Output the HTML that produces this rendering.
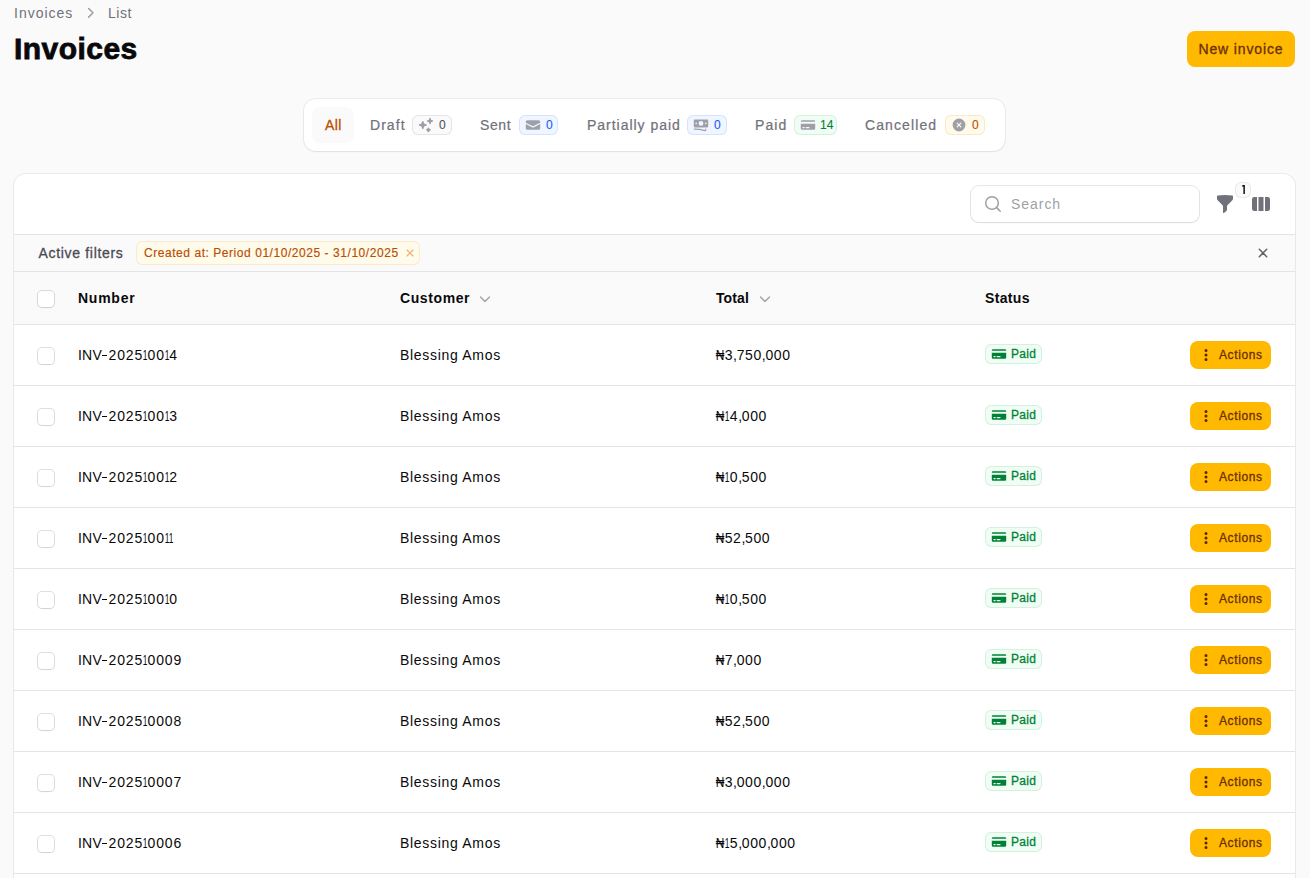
<!DOCTYPE html><html><head><meta charset="utf-8"><style>
*{box-sizing:border-box;margin:0;padding:0}
html,body{width:1310px;height:878px;overflow:hidden;background:#fafafa;font-family:"Liberation Sans", sans-serif;color:#09090b}
.a{position:absolute;white-space:nowrap}
.ic{position:absolute;display:block}
.t14{font-size:14px;line-height:20px}
.t12{font-size:12px;line-height:16px}
.m{-webkit-text-stroke:0.3px currentColor}
</style></head><body><div class="a t14" style="left:14px;top:3px;color:#71717b;letter-spacing:1.0px">Invoices</div>
<svg class="ic" style="left:86px;top:5px;width:10px;height:16px" viewBox="0 0 10 16"><path d="M2.7 3.6 7 7.8 2.7 12.1" fill="none" stroke="#9f9fa9" stroke-width="1.5" stroke-linecap="round" stroke-linejoin="round"/></svg>
<div class="a t14" style="left:108px;top:3px;color:#71717b;letter-spacing:0.5px">List</div>
<div class="a" style="left:14px;top:31px;font-size:30px;line-height:36px;font-weight:700;color:#09090b;letter-spacing:0.45px;-webkit-text-stroke:0.8px #09090b">Invoices</div>
<div class="a t14 m" style="left:1187px;top:31px;width:108px;height:36px;border-radius:8px;background:#ffb900;color:#6b2f06;text-align:center;line-height:36px;letter-spacing:0.87px">New invoice</div>
<div class="a" style="left:304px;top:99px;width:701px;height:52px;background:#fff;border-radius:12px;box-shadow:0 0 0 1px rgba(9,9,11,.06),0 1px 2px rgba(0,0,0,.05)"></div>
<div class="a" style="left:312px;top:107px;width:42px;height:36px;border-radius:8px;background:#fafafa"></div>
<div class="a t14 m" style="left:325px;top:115px;color:#bb4d00;letter-spacing:0.4px">All</div>
<div class="a t14" style="-webkit-text-stroke:0.22px currentColor;left:370px;top:115px;color:#71717b;letter-spacing:1.05px">Draft</div>
<div class="a" style="left:412px;top:115px;width:40px;height:20px;border-radius:6px;background:#fafafa;box-shadow:inset 0 0 0 1px rgba(82,82,92,.12)"></div>
<svg class="ic" style="left:418px;top:117px;width:16px;height:16px;color:#9f9fa9" viewBox="0 0 20 20" fill="currentColor"><path d="M15.98 1.804a1 1 0 0 0-1.96 0l-.24 1.192a1 1 0 0 1-.784.785l-1.192.238a1 1 0 0 0 0 1.962l1.192.238a1 1 0 0 1 .785.785l.238 1.192a1 1 0 0 0 1.962 0l.238-1.192a1 1 0 0 1 .785-.785l1.192-.238a1 1 0 0 0 0-1.962l-1.192-.238a1 1 0 0 1-.785-.785l-.238-1.192ZM6.949 5.684a1 1 0 0 0-1.898 0l-.683 2.051a1 1 0 0 1-.633.633l-2.051.683a1 1 0 0 0 0 1.898l2.051.684a1 1 0 0 1 .633.632l.683 2.051a1 1 0 0 0 1.898 0l.683-2.051a1 1 0 0 1 .633-.633l2.051-.683a1 1 0 0 0 0-1.898l-2.051-.683a1 1 0 0 1-.633-.633L6.95 5.684ZM13.949 13.684a1 1 0 0 0-1.898 0l-.184.551a1 1 0 0 1-.632.633l-.551.183a1 1 0 0 0 0 1.898l.551.183a1 1 0 0 1 .633.633l.183.551a1 1 0 0 0 1.898 0l.184-.551a1 1 0 0 1 .632-.633l.551-.183a1 1 0 0 0 0-1.898l-.551-.184a1 1 0 0 1-.633-.632l-.183-.551Z"/></svg>
<div class="a t12" style="left:439px;top:117px;color:#52525c;-webkit-text-stroke:0.1px currentColor">0</div>
<div class="a t14" style="-webkit-text-stroke:0.22px currentColor;left:480px;top:115px;color:#71717b;letter-spacing:0.6px">Sent</div>
<div class="a" style="left:519px;top:115px;width:39px;height:20px;border-radius:6px;background:#eff6ff;box-shadow:inset 0 0 0 1px rgba(21,93,252,.12)"></div>
<svg class="ic" style="left:525px;top:117px;width:16px;height:16px;color:#9f9fa9" viewBox="0 0 20 20" fill="currentColor"><path d="M3 4a2 2 0 0 0-2 2v1.161l8.441 4.221a1.25 1.25 0 0 0 1.118 0L19 7.162V6a2 2 0 0 0-2-2H3Z"/><path d="m19 8.839-7.77 3.885a2.75 2.75 0 0 1-2.46 0L1 8.839V14a2 2 0 0 0 2 2h14a2 2 0 0 0 2-2V8.839Z"/></svg>
<div class="a t12" style="left:546px;top:117px;color:#155dfc;-webkit-text-stroke:0.1px currentColor">0</div>
<div class="a t14" style="-webkit-text-stroke:0.22px currentColor;left:587px;top:115px;color:#71717b;letter-spacing:0.97px">Partially paid</div>
<div class="a" style="left:687px;top:115px;width:40px;height:20px;border-radius:6px;background:#eff6ff;box-shadow:inset 0 0 0 1px rgba(21,93,252,.12)"></div>
<svg class="ic" style="left:693px;top:117px;width:16px;height:16px;color:#9f9fa9" viewBox="0 0 20 20" fill="currentColor"><path fill-rule="evenodd" d="M1 4a1 1 0 0 1 1-1h16a1 1 0 0 1 1 1v8a1 1 0 0 1-1 1H2a1 1 0 0 1-1-1V4Zm12 4a3 3 0 1 1-6 0 3 3 0 0 1 6 0ZM4 9a1 1 0 1 0 0-2 1 1 0 0 0 0 2Zm13-1a1 1 0 1 1-2 0 1 1 0 0 1 2 0ZM1.75 14.5a.75.75 0 0 0 0 1.5c4.417 0 8.693.603 12.749 1.73 1.111.309 2.251-.512 2.251-1.696v-.784a.75.75 0 0 0-1.5 0v.784a.272.272 0 0 1-.35.25A49.043 49.043 0 0 0 1.75 14.5Z" clip-rule="evenodd"/></svg>
<div class="a t12" style="left:714px;top:117px;color:#155dfc;-webkit-text-stroke:0.1px currentColor">0</div>
<div class="a t14" style="-webkit-text-stroke:0.22px currentColor;left:755px;top:115px;color:#71717b;letter-spacing:1.1px">Paid</div>
<div class="a" style="left:794px;top:115px;width:43px;height:20px;border-radius:6px;background:#f0fdf4;box-shadow:inset 0 0 0 1px rgba(0,166,62,.12)"></div>
<svg class="ic" style="left:800px;top:117px;width:16px;height:16px;color:#9f9fa9" viewBox="0 0 20 20" fill="currentColor"><path fill-rule="evenodd" d="M2.5 4A1.5 1.5 0 0 0 1 5.5V6h18v-.5A1.5 1.5 0 0 0 17.5 4h-15ZM19 8.5H1v6A1.5 1.5 0 0 0 2.5 16h15a1.5 1.5 0 0 0 1.5-1.5v-6ZM3 13.25a.75.75 0 0 1 .75-.75h1.5a.75.75 0 0 1 0 1.5h-1.5a.75.75 0 0 1-.75-.75Zm4.75-.75a.75.75 0 0 0 0 1.5h3.5a.75.75 0 0 0 0-1.5h-3.5Z" clip-rule="evenodd"/></svg>
<div class="a t12" style="left:820px;top:117px;color:#008236;-webkit-text-stroke:0.1px currentColor">14</div>
<div class="a t14" style="-webkit-text-stroke:0.22px currentColor;left:865px;top:115px;color:#71717b;letter-spacing:1.1px">Cancelled</div>
<div class="a" style="left:945px;top:115px;width:40px;height:20px;border-radius:6px;background:#fffbeb;box-shadow:inset 0 0 0 1px rgba(225,113,0,.14)"></div>
<svg class="ic" style="left:951px;top:117px;width:16px;height:16px;color:#9f9fa9" viewBox="0 0 20 20" fill="currentColor"><path fill-rule="evenodd" d="M10 18a8 8 0 1 0 0-16 8 8 0 0 0 0 16ZM8.28 7.22a.75.75 0 0 0-1.06 1.06L8.94 10l-1.72 1.72a.75.75 0 1 0 1.06 1.06L10 11.06l1.72 1.72a.75.75 0 1 0 1.06-1.06L11.06 10l1.72-1.72a.75.75 0 0 0-1.06-1.06L10 8.94 8.28 7.22Z" clip-rule="evenodd"/></svg>
<div class="a t12" style="left:972px;top:117px;color:#bb4d00;-webkit-text-stroke:0.1px currentColor">0</div>
<div class="a" style="left:14px;top:174px;width:1281px;height:760px;background:#fff;border-radius:12px;box-shadow:0 0 0 1px rgba(9,9,11,.06),0 1px 2px rgba(0,0,0,.05)"></div>
<div class="a" style="left:971px;top:186px;width:228px;height:36px;border-radius:8px;background:#fff;box-shadow:0 0 0 1px rgba(9,9,11,.10),0 1px 2px rgba(0,0,0,.05)"></div>
<svg class="ic" style="left:982px;top:193px;width:20px;height:20px" viewBox="0 0 20 20"><circle cx="10" cy="10" r="6.3" fill="none" stroke="#9f9fa9" stroke-width="1.5"/><path d="M14.6 14.6 18.2 18.2" stroke="#9f9fa9" stroke-width="1.5" stroke-linecap="round"/></svg>
<div class="a t14" style="left:1011px;top:194px;color:#9f9fa9;letter-spacing:0.96px">Search</div>
<svg class="ic" style="left:1215px;top:194px;width:20px;height:20px;color:#71717b" viewBox="0 0 20 20" fill="currentColor"><path fill-rule="evenodd" d="M2.628 1.601C5.028 1.206 7.49 1 10 1s4.973.206 7.372.601a.75.75 0 0 1 .628.74v2.288a2.25 2.25 0 0 1-.659 1.59l-4.682 4.683a2.25 2.25 0 0 0-.659 1.59v3.037c0 .684-.31 1.33-.844 1.757l-1.937 1.55A.75.75 0 0 1 8 18.25v-5.757a2.25 2.25 0 0 0-.659-1.591L2.659 6.22A2.25 2.25 0 0 1 2 4.629V2.34a.75.75 0 0 1 .628-.74Z" clip-rule="evenodd"/></svg>
<div class="a" style="left:1235px;top:182px;width:16px;height:16px;border-radius:6px;background:#fafafa;box-shadow:inset 0 0 0 1px rgba(9,9,11,.07);font-size:12px;line-height:16px;text-align:center;color:#09090b"><svg style="position:absolute;left:0;top:0" width="16" height="16" viewBox="0 0 16 16"><path d="M8.4 3.1h1.45v8.8H8.4V4.5H6.9V3.6Q7.9 3.5 8.4 3.1Z" fill="#09090b"/></svg></div>
<svg class="ic" style="left:1251px;top:194px;width:20px;height:20px;color:#71717b" viewBox="0 0 20 20" fill="currentColor"><path d="M14 17h2.75A2.25 2.25 0 0 0 19 14.75v-9.5A2.25 2.25 0 0 0 16.75 3H14v14ZM12.5 3h-5v14h5V3ZM3.25 3H6v14H3.25A2.25 2.25 0 0 1 1 14.75v-9.5A2.25 2.25 0 0 1 3.25 3Z"/></svg>
<div class="a" style="left:14px;top:234px;width:1281px;height:1px;background:#e4e4e7"></div>
<div class="a" style="left:14px;top:235px;width:1281px;height:36px;background:#fafafa"></div>
<div class="a t14 m" style="left:38.5px;top:243px;color:#4a4a52;letter-spacing:0.68px">Active filters</div>
<div class="a t12" style="-webkit-text-stroke:0.15px currentColor;left:136px;top:241px;width:284px;height:24px;border-radius:6px;background:#fffbeb;box-shadow:inset 0 0 0 1px rgba(225,113,0,.12);color:#bb4d00;padding-left:8px;line-height:24px;letter-spacing:0.55px">Created at: Period 01/10/2025 - 31/10/2025</div>
<svg class="ic" style="left:405px;top:248px;width:10px;height:10px" viewBox="0 0 10 10"><path d="M2 2l6 6M8 2 2 8" stroke="#f0b070" stroke-width="1.1" stroke-linecap="round"/></svg>
<svg class="ic" style="left:1256.5px;top:246.5px;width:12px;height:12px" viewBox="0 0 12 12"><path d="M2.3 2.3 9.7 9.7M9.7 2.3 2.3 9.7" stroke="#62626c" stroke-width="1.5" stroke-linecap="round"/></svg>
<div class="a" style="left:14px;top:271px;width:1281px;height:1px;background:#e4e4e7"></div>
<div class="a" style="left:14px;top:272px;width:1281px;height:52px;background:#fafafa"></div>
<div class="a" style="left:38px;top:291px;width:16px;height:16px;border-radius:4px;background:#fff;box-shadow:0 0 0 1px rgba(9,9,11,.13),0 1px 2px rgba(0,0,0,.06)"></div>
<div class="a t14" style="left:78px;top:288px;font-weight:700;letter-spacing:0.75px">Number</div>
<div class="a t14" style="left:400px;top:288px;font-weight:700;letter-spacing:0.6px">Customer</div>
<svg class="ic" style="left:478px;top:292px;width:14px;height:14px" viewBox="0 0 14 14"><path d="M2.5 5 7 9.5 11.5 5" fill="none" stroke="#9f9fa9" stroke-width="1.3" stroke-linecap="round" stroke-linejoin="round"/></svg>
<div class="a t14" style="left:716px;top:288px;font-weight:700;letter-spacing:0.1px">Total</div>
<svg class="ic" style="left:758px;top:292px;width:14px;height:14px" viewBox="0 0 14 14"><path d="M2.5 5 7 9.5 11.5 5" fill="none" stroke="#9f9fa9" stroke-width="1.3" stroke-linecap="round" stroke-linejoin="round"/></svg>
<div class="a t14" style="left:985px;top:288px;font-weight:700;letter-spacing:0.35px">Status</div>
<div class="a" style="left:14px;top:324px;width:1281px;height:1px;background:#e4e4e7"></div>
<div class="a" style="left:38px;top:348px;width:16px;height:16px;border-radius:4px;background:#fff;box-shadow:0 0 0 1px rgba(9,9,11,.13),0 1px 2px rgba(0,0,0,.06)"></div>
<div class="a t14" style="left:78px;top:345px;letter-spacing:0.2px">INV</div>
<div class="a" style="left:101.5px;top:354.5px;width:5.5px;height:1.4px;background:#09090b"></div>
<div class="a t14" style="left:108.5px;top:345px;letter-spacing:0.9px">2025<span style="display:inline-block;transform:scaleX(.6);margin:0 -2.2px 0 -2.25px">1</span>00<span style="display:inline-block;transform:scaleX(.6);margin:0 -2.2px 0 -2.25px">1</span>4</div>
<div class="a t14" style="left:400px;top:345px;letter-spacing:0.7px">Blessing Amos</div>
<div class="a t14" style="left:716px;top:345px;letter-spacing:0.6px"><span style="display:inline-block;transform:scaleX(.85);margin:0 -1.2px 0 -0.9px">₦</span>3<span style="margin-right:-0.9px">,</span>750<span style="margin-right:-0.9px">,</span>000</div>
<div class="a" style="left:985px;top:344px;width:57px;height:20px;border-radius:6px;background:#f0fdf4;box-shadow:inset 0 0 0 1px rgba(0,166,62,.12)"></div>
<svg class="ic" style="left:991px;top:346px;width:16px;height:16px;color:#008236" viewBox="0 0 20 20" fill="currentColor"><path fill-rule="evenodd" d="M2.5 4A1.5 1.5 0 0 0 1 5.5V6h18v-.5A1.5 1.5 0 0 0 17.5 4h-15ZM19 8.5H1v6A1.5 1.5 0 0 0 2.5 16h15a1.5 1.5 0 0 0 1.5-1.5v-6ZM3 13.25a.75.75 0 0 1 .75-.75h1.5a.75.75 0 0 1 0 1.5h-1.5a.75.75 0 0 1-.75-.75Zm4.75-.75a.75.75 0 0 0 0 1.5h3.5a.75.75 0 0 0 0-1.5h-3.5Z" clip-rule="evenodd"/></svg>
<div class="a t12 m" style="left:1011px;top:346px;color:#008236;letter-spacing:0.3px">Paid</div>
<div class="a" style="left:1190px;top:341px;width:81px;height:28px;border-radius:8px;background:#ffb900"></div>
<svg class="ic" style="left:1198px;top:347px;width:16px;height:16px;color:#5a2705" viewBox="0 0 16 16" fill="currentColor"><path d="M8 2a1.5 1.5 0 1 1 0 3 1.5 1.5 0 0 1 0-3ZM8 6.5a1.5 1.5 0 1 1 0 3 1.5 1.5 0 0 1 0-3ZM9.5 12.5a1.5 1.5 0 1 0-3 0 1.5 1.5 0 0 0 3 0Z"/></svg>
<div class="a t12 m" style="left:1219px;top:347px;color:#6b2f06;letter-spacing:0.6px">Actions</div>
<div class="a" style="left:14px;top:385px;width:1281px;height:1px;background:#e4e4e7"></div>
<div class="a" style="left:38px;top:409px;width:16px;height:16px;border-radius:4px;background:#fff;box-shadow:0 0 0 1px rgba(9,9,11,.13),0 1px 2px rgba(0,0,0,.06)"></div>
<div class="a t14" style="left:78px;top:406px;letter-spacing:0.2px">INV</div>
<div class="a" style="left:101.5px;top:415.5px;width:5.5px;height:1.4px;background:#09090b"></div>
<div class="a t14" style="left:108.5px;top:406px;letter-spacing:0.9px">2025<span style="display:inline-block;transform:scaleX(.6);margin:0 -2.2px 0 -2.25px">1</span>00<span style="display:inline-block;transform:scaleX(.6);margin:0 -2.2px 0 -2.25px">1</span>3</div>
<div class="a t14" style="left:400px;top:406px;letter-spacing:0.7px">Blessing Amos</div>
<div class="a t14" style="left:716px;top:406px;letter-spacing:0.6px"><span style="display:inline-block;transform:scaleX(.85);margin:0 -1.2px 0 -0.9px">₦</span><span style="display:inline-block;transform:scaleX(.6);margin:0 -1.65px">1</span>4<span style="margin-right:-0.9px">,</span>000</div>
<div class="a" style="left:985px;top:405px;width:57px;height:20px;border-radius:6px;background:#f0fdf4;box-shadow:inset 0 0 0 1px rgba(0,166,62,.12)"></div>
<svg class="ic" style="left:991px;top:407px;width:16px;height:16px;color:#008236" viewBox="0 0 20 20" fill="currentColor"><path fill-rule="evenodd" d="M2.5 4A1.5 1.5 0 0 0 1 5.5V6h18v-.5A1.5 1.5 0 0 0 17.5 4h-15ZM19 8.5H1v6A1.5 1.5 0 0 0 2.5 16h15a1.5 1.5 0 0 0 1.5-1.5v-6ZM3 13.25a.75.75 0 0 1 .75-.75h1.5a.75.75 0 0 1 0 1.5h-1.5a.75.75 0 0 1-.75-.75Zm4.75-.75a.75.75 0 0 0 0 1.5h3.5a.75.75 0 0 0 0-1.5h-3.5Z" clip-rule="evenodd"/></svg>
<div class="a t12 m" style="left:1011px;top:407px;color:#008236;letter-spacing:0.3px">Paid</div>
<div class="a" style="left:1190px;top:402px;width:81px;height:28px;border-radius:8px;background:#ffb900"></div>
<svg class="ic" style="left:1198px;top:408px;width:16px;height:16px;color:#5a2705" viewBox="0 0 16 16" fill="currentColor"><path d="M8 2a1.5 1.5 0 1 1 0 3 1.5 1.5 0 0 1 0-3ZM8 6.5a1.5 1.5 0 1 1 0 3 1.5 1.5 0 0 1 0-3ZM9.5 12.5a1.5 1.5 0 1 0-3 0 1.5 1.5 0 0 0 3 0Z"/></svg>
<div class="a t12 m" style="left:1219px;top:408px;color:#6b2f06;letter-spacing:0.6px">Actions</div>
<div class="a" style="left:14px;top:446px;width:1281px;height:1px;background:#e4e4e7"></div>
<div class="a" style="left:38px;top:470px;width:16px;height:16px;border-radius:4px;background:#fff;box-shadow:0 0 0 1px rgba(9,9,11,.13),0 1px 2px rgba(0,0,0,.06)"></div>
<div class="a t14" style="left:78px;top:467px;letter-spacing:0.2px">INV</div>
<div class="a" style="left:101.5px;top:476.5px;width:5.5px;height:1.4px;background:#09090b"></div>
<div class="a t14" style="left:108.5px;top:467px;letter-spacing:0.9px">2025<span style="display:inline-block;transform:scaleX(.6);margin:0 -2.2px 0 -2.25px">1</span>00<span style="display:inline-block;transform:scaleX(.6);margin:0 -2.2px 0 -2.25px">1</span>2</div>
<div class="a t14" style="left:400px;top:467px;letter-spacing:0.7px">Blessing Amos</div>
<div class="a t14" style="left:716px;top:467px;letter-spacing:0.6px"><span style="display:inline-block;transform:scaleX(.85);margin:0 -1.2px 0 -0.9px">₦</span><span style="display:inline-block;transform:scaleX(.6);margin:0 -1.65px">1</span>0<span style="margin-right:-0.9px">,</span>500</div>
<div class="a" style="left:985px;top:466px;width:57px;height:20px;border-radius:6px;background:#f0fdf4;box-shadow:inset 0 0 0 1px rgba(0,166,62,.12)"></div>
<svg class="ic" style="left:991px;top:468px;width:16px;height:16px;color:#008236" viewBox="0 0 20 20" fill="currentColor"><path fill-rule="evenodd" d="M2.5 4A1.5 1.5 0 0 0 1 5.5V6h18v-.5A1.5 1.5 0 0 0 17.5 4h-15ZM19 8.5H1v6A1.5 1.5 0 0 0 2.5 16h15a1.5 1.5 0 0 0 1.5-1.5v-6ZM3 13.25a.75.75 0 0 1 .75-.75h1.5a.75.75 0 0 1 0 1.5h-1.5a.75.75 0 0 1-.75-.75Zm4.75-.75a.75.75 0 0 0 0 1.5h3.5a.75.75 0 0 0 0-1.5h-3.5Z" clip-rule="evenodd"/></svg>
<div class="a t12 m" style="left:1011px;top:468px;color:#008236;letter-spacing:0.3px">Paid</div>
<div class="a" style="left:1190px;top:463px;width:81px;height:28px;border-radius:8px;background:#ffb900"></div>
<svg class="ic" style="left:1198px;top:469px;width:16px;height:16px;color:#5a2705" viewBox="0 0 16 16" fill="currentColor"><path d="M8 2a1.5 1.5 0 1 1 0 3 1.5 1.5 0 0 1 0-3ZM8 6.5a1.5 1.5 0 1 1 0 3 1.5 1.5 0 0 1 0-3ZM9.5 12.5a1.5 1.5 0 1 0-3 0 1.5 1.5 0 0 0 3 0Z"/></svg>
<div class="a t12 m" style="left:1219px;top:469px;color:#6b2f06;letter-spacing:0.6px">Actions</div>
<div class="a" style="left:14px;top:507px;width:1281px;height:1px;background:#e4e4e7"></div>
<div class="a" style="left:38px;top:531px;width:16px;height:16px;border-radius:4px;background:#fff;box-shadow:0 0 0 1px rgba(9,9,11,.13),0 1px 2px rgba(0,0,0,.06)"></div>
<div class="a t14" style="left:78px;top:528px;letter-spacing:0.2px">INV</div>
<div class="a" style="left:101.5px;top:537.5px;width:5.5px;height:1.4px;background:#09090b"></div>
<div class="a t14" style="left:108.5px;top:528px;letter-spacing:0.9px">2025<span style="display:inline-block;transform:scaleX(.6);margin:0 -2.2px 0 -2.25px">1</span>00<span style="display:inline-block;transform:scaleX(.6);margin:0 -2.2px 0 -2.25px">1</span><span style="display:inline-block;transform:scaleX(.6);margin:0 -2.2px 0 -2.25px">1</span></div>
<div class="a t14" style="left:400px;top:528px;letter-spacing:0.7px">Blessing Amos</div>
<div class="a t14" style="left:716px;top:528px;letter-spacing:0.6px"><span style="display:inline-block;transform:scaleX(.85);margin:0 -1.2px 0 -0.9px">₦</span>52<span style="margin-right:-0.9px">,</span>500</div>
<div class="a" style="left:985px;top:527px;width:57px;height:20px;border-radius:6px;background:#f0fdf4;box-shadow:inset 0 0 0 1px rgba(0,166,62,.12)"></div>
<svg class="ic" style="left:991px;top:529px;width:16px;height:16px;color:#008236" viewBox="0 0 20 20" fill="currentColor"><path fill-rule="evenodd" d="M2.5 4A1.5 1.5 0 0 0 1 5.5V6h18v-.5A1.5 1.5 0 0 0 17.5 4h-15ZM19 8.5H1v6A1.5 1.5 0 0 0 2.5 16h15a1.5 1.5 0 0 0 1.5-1.5v-6ZM3 13.25a.75.75 0 0 1 .75-.75h1.5a.75.75 0 0 1 0 1.5h-1.5a.75.75 0 0 1-.75-.75Zm4.75-.75a.75.75 0 0 0 0 1.5h3.5a.75.75 0 0 0 0-1.5h-3.5Z" clip-rule="evenodd"/></svg>
<div class="a t12 m" style="left:1011px;top:529px;color:#008236;letter-spacing:0.3px">Paid</div>
<div class="a" style="left:1190px;top:524px;width:81px;height:28px;border-radius:8px;background:#ffb900"></div>
<svg class="ic" style="left:1198px;top:530px;width:16px;height:16px;color:#5a2705" viewBox="0 0 16 16" fill="currentColor"><path d="M8 2a1.5 1.5 0 1 1 0 3 1.5 1.5 0 0 1 0-3ZM8 6.5a1.5 1.5 0 1 1 0 3 1.5 1.5 0 0 1 0-3ZM9.5 12.5a1.5 1.5 0 1 0-3 0 1.5 1.5 0 0 0 3 0Z"/></svg>
<div class="a t12 m" style="left:1219px;top:530px;color:#6b2f06;letter-spacing:0.6px">Actions</div>
<div class="a" style="left:14px;top:568px;width:1281px;height:1px;background:#e4e4e7"></div>
<div class="a" style="left:38px;top:592px;width:16px;height:16px;border-radius:4px;background:#fff;box-shadow:0 0 0 1px rgba(9,9,11,.13),0 1px 2px rgba(0,0,0,.06)"></div>
<div class="a t14" style="left:78px;top:589px;letter-spacing:0.2px">INV</div>
<div class="a" style="left:101.5px;top:598.5px;width:5.5px;height:1.4px;background:#09090b"></div>
<div class="a t14" style="left:108.5px;top:589px;letter-spacing:0.9px">2025<span style="display:inline-block;transform:scaleX(.6);margin:0 -2.2px 0 -2.25px">1</span>00<span style="display:inline-block;transform:scaleX(.6);margin:0 -2.2px 0 -2.25px">1</span>0</div>
<div class="a t14" style="left:400px;top:589px;letter-spacing:0.7px">Blessing Amos</div>
<div class="a t14" style="left:716px;top:589px;letter-spacing:0.6px"><span style="display:inline-block;transform:scaleX(.85);margin:0 -1.2px 0 -0.9px">₦</span><span style="display:inline-block;transform:scaleX(.6);margin:0 -1.65px">1</span>0<span style="margin-right:-0.9px">,</span>500</div>
<div class="a" style="left:985px;top:588px;width:57px;height:20px;border-radius:6px;background:#f0fdf4;box-shadow:inset 0 0 0 1px rgba(0,166,62,.12)"></div>
<svg class="ic" style="left:991px;top:590px;width:16px;height:16px;color:#008236" viewBox="0 0 20 20" fill="currentColor"><path fill-rule="evenodd" d="M2.5 4A1.5 1.5 0 0 0 1 5.5V6h18v-.5A1.5 1.5 0 0 0 17.5 4h-15ZM19 8.5H1v6A1.5 1.5 0 0 0 2.5 16h15a1.5 1.5 0 0 0 1.5-1.5v-6ZM3 13.25a.75.75 0 0 1 .75-.75h1.5a.75.75 0 0 1 0 1.5h-1.5a.75.75 0 0 1-.75-.75Zm4.75-.75a.75.75 0 0 0 0 1.5h3.5a.75.75 0 0 0 0-1.5h-3.5Z" clip-rule="evenodd"/></svg>
<div class="a t12 m" style="left:1011px;top:590px;color:#008236;letter-spacing:0.3px">Paid</div>
<div class="a" style="left:1190px;top:585px;width:81px;height:28px;border-radius:8px;background:#ffb900"></div>
<svg class="ic" style="left:1198px;top:591px;width:16px;height:16px;color:#5a2705" viewBox="0 0 16 16" fill="currentColor"><path d="M8 2a1.5 1.5 0 1 1 0 3 1.5 1.5 0 0 1 0-3ZM8 6.5a1.5 1.5 0 1 1 0 3 1.5 1.5 0 0 1 0-3ZM9.5 12.5a1.5 1.5 0 1 0-3 0 1.5 1.5 0 0 0 3 0Z"/></svg>
<div class="a t12 m" style="left:1219px;top:591px;color:#6b2f06;letter-spacing:0.6px">Actions</div>
<div class="a" style="left:14px;top:629px;width:1281px;height:1px;background:#e4e4e7"></div>
<div class="a" style="left:38px;top:653px;width:16px;height:16px;border-radius:4px;background:#fff;box-shadow:0 0 0 1px rgba(9,9,11,.13),0 1px 2px rgba(0,0,0,.06)"></div>
<div class="a t14" style="left:78px;top:650px;letter-spacing:0.2px">INV</div>
<div class="a" style="left:101.5px;top:659.5px;width:5.5px;height:1.4px;background:#09090b"></div>
<div class="a t14" style="left:108.5px;top:650px;letter-spacing:0.9px">2025<span style="display:inline-block;transform:scaleX(.6);margin:0 -2.2px 0 -2.25px">1</span>0009</div>
<div class="a t14" style="left:400px;top:650px;letter-spacing:0.7px">Blessing Amos</div>
<div class="a t14" style="left:716px;top:650px;letter-spacing:0.6px"><span style="display:inline-block;transform:scaleX(.85);margin:0 -1.2px 0 -0.9px">₦</span>7<span style="margin-right:-0.9px">,</span>000</div>
<div class="a" style="left:985px;top:649px;width:57px;height:20px;border-radius:6px;background:#f0fdf4;box-shadow:inset 0 0 0 1px rgba(0,166,62,.12)"></div>
<svg class="ic" style="left:991px;top:651px;width:16px;height:16px;color:#008236" viewBox="0 0 20 20" fill="currentColor"><path fill-rule="evenodd" d="M2.5 4A1.5 1.5 0 0 0 1 5.5V6h18v-.5A1.5 1.5 0 0 0 17.5 4h-15ZM19 8.5H1v6A1.5 1.5 0 0 0 2.5 16h15a1.5 1.5 0 0 0 1.5-1.5v-6ZM3 13.25a.75.75 0 0 1 .75-.75h1.5a.75.75 0 0 1 0 1.5h-1.5a.75.75 0 0 1-.75-.75Zm4.75-.75a.75.75 0 0 0 0 1.5h3.5a.75.75 0 0 0 0-1.5h-3.5Z" clip-rule="evenodd"/></svg>
<div class="a t12 m" style="left:1011px;top:651px;color:#008236;letter-spacing:0.3px">Paid</div>
<div class="a" style="left:1190px;top:646px;width:81px;height:28px;border-radius:8px;background:#ffb900"></div>
<svg class="ic" style="left:1198px;top:652px;width:16px;height:16px;color:#5a2705" viewBox="0 0 16 16" fill="currentColor"><path d="M8 2a1.5 1.5 0 1 1 0 3 1.5 1.5 0 0 1 0-3ZM8 6.5a1.5 1.5 0 1 1 0 3 1.5 1.5 0 0 1 0-3ZM9.5 12.5a1.5 1.5 0 1 0-3 0 1.5 1.5 0 0 0 3 0Z"/></svg>
<div class="a t12 m" style="left:1219px;top:652px;color:#6b2f06;letter-spacing:0.6px">Actions</div>
<div class="a" style="left:14px;top:690px;width:1281px;height:1px;background:#e4e4e7"></div>
<div class="a" style="left:38px;top:714px;width:16px;height:16px;border-radius:4px;background:#fff;box-shadow:0 0 0 1px rgba(9,9,11,.13),0 1px 2px rgba(0,0,0,.06)"></div>
<div class="a t14" style="left:78px;top:711px;letter-spacing:0.2px">INV</div>
<div class="a" style="left:101.5px;top:720.5px;width:5.5px;height:1.4px;background:#09090b"></div>
<div class="a t14" style="left:108.5px;top:711px;letter-spacing:0.9px">2025<span style="display:inline-block;transform:scaleX(.6);margin:0 -2.2px 0 -2.25px">1</span>0008</div>
<div class="a t14" style="left:400px;top:711px;letter-spacing:0.7px">Blessing Amos</div>
<div class="a t14" style="left:716px;top:711px;letter-spacing:0.6px"><span style="display:inline-block;transform:scaleX(.85);margin:0 -1.2px 0 -0.9px">₦</span>52<span style="margin-right:-0.9px">,</span>500</div>
<div class="a" style="left:985px;top:710px;width:57px;height:20px;border-radius:6px;background:#f0fdf4;box-shadow:inset 0 0 0 1px rgba(0,166,62,.12)"></div>
<svg class="ic" style="left:991px;top:712px;width:16px;height:16px;color:#008236" viewBox="0 0 20 20" fill="currentColor"><path fill-rule="evenodd" d="M2.5 4A1.5 1.5 0 0 0 1 5.5V6h18v-.5A1.5 1.5 0 0 0 17.5 4h-15ZM19 8.5H1v6A1.5 1.5 0 0 0 2.5 16h15a1.5 1.5 0 0 0 1.5-1.5v-6ZM3 13.25a.75.75 0 0 1 .75-.75h1.5a.75.75 0 0 1 0 1.5h-1.5a.75.75 0 0 1-.75-.75Zm4.75-.75a.75.75 0 0 0 0 1.5h3.5a.75.75 0 0 0 0-1.5h-3.5Z" clip-rule="evenodd"/></svg>
<div class="a t12 m" style="left:1011px;top:712px;color:#008236;letter-spacing:0.3px">Paid</div>
<div class="a" style="left:1190px;top:707px;width:81px;height:28px;border-radius:8px;background:#ffb900"></div>
<svg class="ic" style="left:1198px;top:713px;width:16px;height:16px;color:#5a2705" viewBox="0 0 16 16" fill="currentColor"><path d="M8 2a1.5 1.5 0 1 1 0 3 1.5 1.5 0 0 1 0-3ZM8 6.5a1.5 1.5 0 1 1 0 3 1.5 1.5 0 0 1 0-3ZM9.5 12.5a1.5 1.5 0 1 0-3 0 1.5 1.5 0 0 0 3 0Z"/></svg>
<div class="a t12 m" style="left:1219px;top:713px;color:#6b2f06;letter-spacing:0.6px">Actions</div>
<div class="a" style="left:14px;top:751px;width:1281px;height:1px;background:#e4e4e7"></div>
<div class="a" style="left:38px;top:775px;width:16px;height:16px;border-radius:4px;background:#fff;box-shadow:0 0 0 1px rgba(9,9,11,.13),0 1px 2px rgba(0,0,0,.06)"></div>
<div class="a t14" style="left:78px;top:772px;letter-spacing:0.2px">INV</div>
<div class="a" style="left:101.5px;top:781.5px;width:5.5px;height:1.4px;background:#09090b"></div>
<div class="a t14" style="left:108.5px;top:772px;letter-spacing:0.9px">2025<span style="display:inline-block;transform:scaleX(.6);margin:0 -2.2px 0 -2.25px">1</span>0007</div>
<div class="a t14" style="left:400px;top:772px;letter-spacing:0.7px">Blessing Amos</div>
<div class="a t14" style="left:716px;top:772px;letter-spacing:0.6px"><span style="display:inline-block;transform:scaleX(.85);margin:0 -1.2px 0 -0.9px">₦</span>3<span style="margin-right:-0.9px">,</span>000<span style="margin-right:-0.9px">,</span>000</div>
<div class="a" style="left:985px;top:771px;width:57px;height:20px;border-radius:6px;background:#f0fdf4;box-shadow:inset 0 0 0 1px rgba(0,166,62,.12)"></div>
<svg class="ic" style="left:991px;top:773px;width:16px;height:16px;color:#008236" viewBox="0 0 20 20" fill="currentColor"><path fill-rule="evenodd" d="M2.5 4A1.5 1.5 0 0 0 1 5.5V6h18v-.5A1.5 1.5 0 0 0 17.5 4h-15ZM19 8.5H1v6A1.5 1.5 0 0 0 2.5 16h15a1.5 1.5 0 0 0 1.5-1.5v-6ZM3 13.25a.75.75 0 0 1 .75-.75h1.5a.75.75 0 0 1 0 1.5h-1.5a.75.75 0 0 1-.75-.75Zm4.75-.75a.75.75 0 0 0 0 1.5h3.5a.75.75 0 0 0 0-1.5h-3.5Z" clip-rule="evenodd"/></svg>
<div class="a t12 m" style="left:1011px;top:773px;color:#008236;letter-spacing:0.3px">Paid</div>
<div class="a" style="left:1190px;top:768px;width:81px;height:28px;border-radius:8px;background:#ffb900"></div>
<svg class="ic" style="left:1198px;top:774px;width:16px;height:16px;color:#5a2705" viewBox="0 0 16 16" fill="currentColor"><path d="M8 2a1.5 1.5 0 1 1 0 3 1.5 1.5 0 0 1 0-3ZM8 6.5a1.5 1.5 0 1 1 0 3 1.5 1.5 0 0 1 0-3ZM9.5 12.5a1.5 1.5 0 1 0-3 0 1.5 1.5 0 0 0 3 0Z"/></svg>
<div class="a t12 m" style="left:1219px;top:774px;color:#6b2f06;letter-spacing:0.6px">Actions</div>
<div class="a" style="left:14px;top:812px;width:1281px;height:1px;background:#e4e4e7"></div>
<div class="a" style="left:38px;top:836px;width:16px;height:16px;border-radius:4px;background:#fff;box-shadow:0 0 0 1px rgba(9,9,11,.13),0 1px 2px rgba(0,0,0,.06)"></div>
<div class="a t14" style="left:78px;top:833px;letter-spacing:0.2px">INV</div>
<div class="a" style="left:101.5px;top:842.5px;width:5.5px;height:1.4px;background:#09090b"></div>
<div class="a t14" style="left:108.5px;top:833px;letter-spacing:0.9px">2025<span style="display:inline-block;transform:scaleX(.6);margin:0 -2.2px 0 -2.25px">1</span>0006</div>
<div class="a t14" style="left:400px;top:833px;letter-spacing:0.7px">Blessing Amos</div>
<div class="a t14" style="left:716px;top:833px;letter-spacing:0.6px"><span style="display:inline-block;transform:scaleX(.85);margin:0 -1.2px 0 -0.9px">₦</span><span style="display:inline-block;transform:scaleX(.6);margin:0 -1.65px">1</span>5<span style="margin-right:-0.9px">,</span>000<span style="margin-right:-0.9px">,</span>000</div>
<div class="a" style="left:985px;top:832px;width:57px;height:20px;border-radius:6px;background:#f0fdf4;box-shadow:inset 0 0 0 1px rgba(0,166,62,.12)"></div>
<svg class="ic" style="left:991px;top:834px;width:16px;height:16px;color:#008236" viewBox="0 0 20 20" fill="currentColor"><path fill-rule="evenodd" d="M2.5 4A1.5 1.5 0 0 0 1 5.5V6h18v-.5A1.5 1.5 0 0 0 17.5 4h-15ZM19 8.5H1v6A1.5 1.5 0 0 0 2.5 16h15a1.5 1.5 0 0 0 1.5-1.5v-6ZM3 13.25a.75.75 0 0 1 .75-.75h1.5a.75.75 0 0 1 0 1.5h-1.5a.75.75 0 0 1-.75-.75Zm4.75-.75a.75.75 0 0 0 0 1.5h3.5a.75.75 0 0 0 0-1.5h-3.5Z" clip-rule="evenodd"/></svg>
<div class="a t12 m" style="left:1011px;top:834px;color:#008236;letter-spacing:0.3px">Paid</div>
<div class="a" style="left:1190px;top:829px;width:81px;height:28px;border-radius:8px;background:#ffb900"></div>
<svg class="ic" style="left:1198px;top:835px;width:16px;height:16px;color:#5a2705" viewBox="0 0 16 16" fill="currentColor"><path d="M8 2a1.5 1.5 0 1 1 0 3 1.5 1.5 0 0 1 0-3ZM8 6.5a1.5 1.5 0 1 1 0 3 1.5 1.5 0 0 1 0-3ZM9.5 12.5a1.5 1.5 0 1 0-3 0 1.5 1.5 0 0 0 3 0Z"/></svg>
<div class="a t12 m" style="left:1219px;top:835px;color:#6b2f06;letter-spacing:0.6px">Actions</div>
<div class="a" style="left:14px;top:873px;width:1281px;height:1px;background:#e4e4e7"></div></body></html>
